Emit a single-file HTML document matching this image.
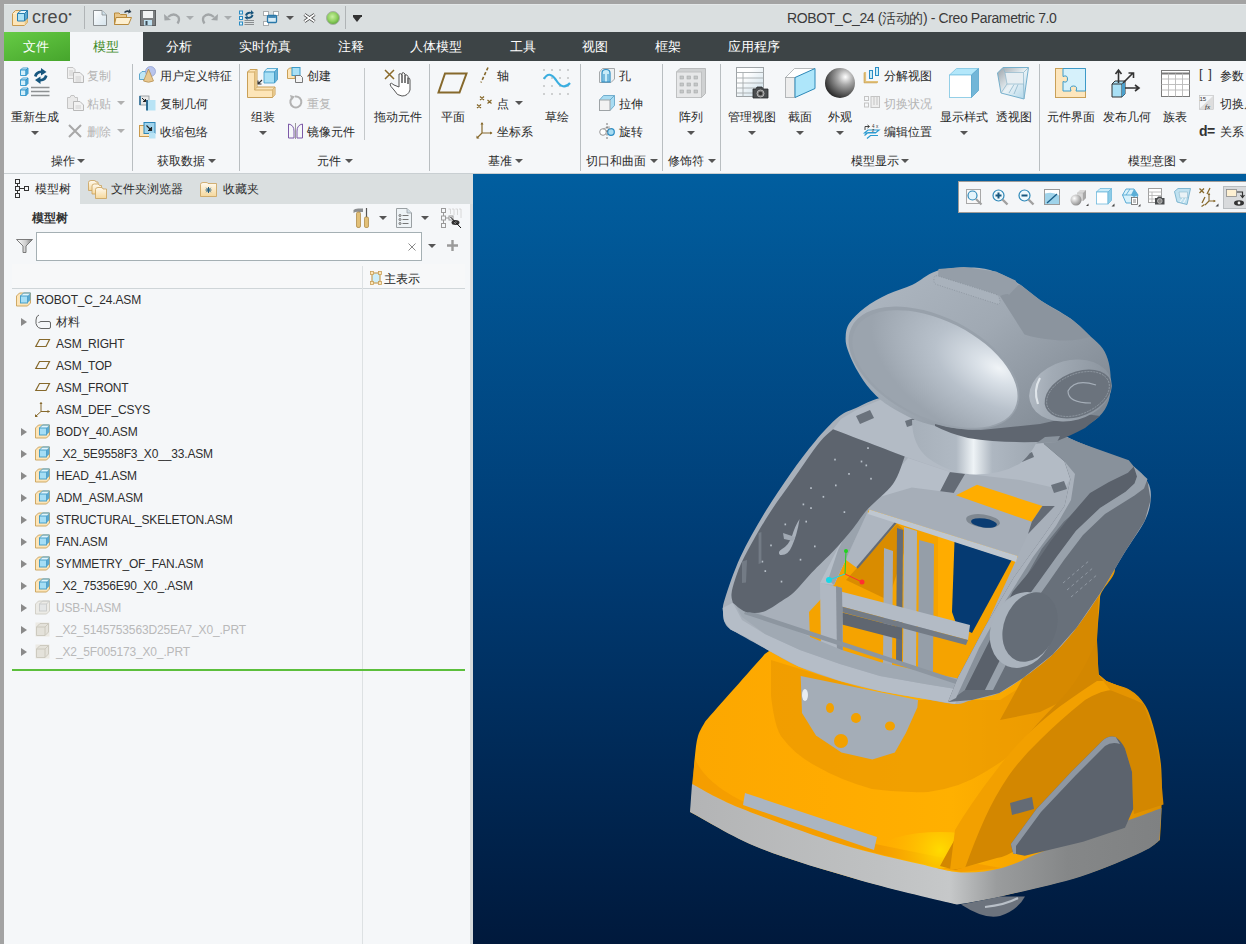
<!DOCTYPE html>
<html><head><meta charset="utf-8">
<style>
*{box-sizing:border-box;margin:0;padding:0}
html,body{width:1246px;height:944px;overflow:hidden;background:#a3a3a3;font-family:"Liberation Sans",sans-serif;color:#333}
.a{position:absolute}
svg{position:absolute;overflow:visible}
.t12{position:absolute;font-size:12px;line-height:12px;white-space:nowrap;color:#2b2b2b}
.t13{position:absolute;font-size:13px;line-height:13px;white-space:nowrap}
.dis{color:#b4b4b4}
#title{left:4px;top:4px;width:1242px;height:28px;background:#dadfe0;border-top:1px solid #e3e7e8}
#tabs{left:4px;top:32px;width:1242px;height:29px;background:#3d4446}
#ribbon{left:4px;top:61px;width:1242px;height:113px;background:#f5f7f9;border-bottom:1px solid #c9cfd2}
#panel{left:4px;top:174px;width:469px;height:770px;background:#f5f7f9}
#view{left:473px;top:174px;width:773px;height:770px;background:linear-gradient(#015e9f,#003b73 50%,#00193c)}
.tab{color:#fff}
.vsep{position:absolute;width:1px;background:#b9bec1}
.arr{position:absolute;width:0;height:0;border-left:4px solid transparent;border-right:4px solid transparent;border-top:4px solid #555}
</style></head><body>
<div id="title" class="a"></div>
<!-- title bar contents -->
<svg style="left:12px;top:10px" width="16" height="16" viewBox="0 0 16 16">
 <path d="M0.5 3.5 L3.5 0.5 H15.5 V12.5 L12.5 15.5 H0.5 Z" fill="#fde5b8" stroke="#c99a4e"/>
 <path d="M0.8 3.5 H12.5 V15.3" fill="none" stroke="#fff" stroke-width="0.6" opacity="0.6"/>
 <path d="M12.5 11.5 L15.5 8.5 V12.5 L12.5 15.5 Z" fill="#e9c98a"/>
 <path d="M5.5 3.5 L9 0.5 H15.5 L12.5 3.5 Z" fill="#e6f6fc" stroke="#2a7fb0" stroke-width="1"/>
 <path d="M5.5 3.5 H12.5 V11 H5.5 Z" fill="#aee3f7" stroke="#2a7fb0" stroke-width="1"/>
 <path d="M12.5 3.5 L15.5 0.5 V8 L12.5 11 Z" fill="#5ea9cf" stroke="#2a7fb0" stroke-width="1"/>
</svg>
<div class="a" style="left:32px;top:1px;font-size:18px;line-height:26px;color:#4a4a4a;letter-spacing:0.3px">creo<span style="font-size:6px;vertical-align:7px">&#9679;</span></div>
<div class="vsep" style="left:84px;top:6px;height:23px;background:#b0b4b6"></div>
<!-- new -->
<svg style="left:93px;top:10px" width="14" height="16" viewBox="0 0 14 16">
 <defs><linearGradient id="gdoc" x1="0" y1="0" x2="1" y2="1"><stop offset="0" stop-color="#fff"/><stop offset="1" stop-color="#d5e3ec"/></linearGradient></defs>
 <path d="M0.5 0.5 H9 L13.5 5 V15.5 H0.5 Z" fill="url(#gdoc)" stroke="#8a8f92"/>
 <path d="M9 0.5 V5 H13.5" fill="#cde0ea" stroke="#8a8f92" stroke-width="0.8"/>
</svg>
<!-- open -->
<svg style="left:114px;top:9px" width="18" height="16" viewBox="0 0 18 16">
 <path d="M0.5 4 H5 L6.5 5.5 H12.5 V15.5 H0.5 Z" fill="#e8c68a" stroke="#b88a3c"/>
 <path d="M2 8.5 H17.5 L14.5 15.5 H0.5 Z" fill="#fdefd0" stroke="#b88a3c"/>
 <path d="M10 3 Q12 0.5 15 1.5 L15 0 L17.5 3 L14 4.5 L14.5 3 Q12.5 2.5 11 4 Z" fill="#2b3c4c"/>
</svg>
<!-- save -->
<svg style="left:140px;top:10px" width="16" height="16" viewBox="0 0 16 16">
 <rect x="0.5" y="0.5" width="15" height="15" fill="#7c7f81" stroke="#5c5f61"/>
 <rect x="3" y="1" width="10" height="7" fill="#f2f4f5"/>
 <rect x="4" y="10" width="8" height="5.5" fill="#bfe0f0"/>
 <rect x="5.5" y="11" width="2" height="4" fill="#3b4a55"/>
</svg>
<!-- undo -->
<svg style="left:164px;top:13px" width="16" height="11" viewBox="0 0 16 11">
 <path d="M4 4 Q10 -1 14.5 4 Q16 7 13.5 10.5" fill="none" stroke="#a2a6a8" stroke-width="2.2"/>
 <path d="M0 1 L0.5 7.5 L7 7 Z" fill="#a2a6a8"/>
</svg>
<div class="arr" style="left:186px;top:16px;border-top-color:#a9adaf"></div>
<svg style="left:202px;top:13px" width="16" height="11" viewBox="0 0 16 11">
 <path d="M12 4 Q6 -1 1.5 4 Q0 7 2.5 10.5" fill="none" stroke="#a2a6a8" stroke-width="2.2"/>
 <path d="M16 1 L15.5 7.5 L9 7 Z" fill="#a2a6a8"/>
</svg>
<div class="arr" style="left:224px;top:16px;border-top-color:#a9adaf"></div>
<!-- regen small -->
<svg style="left:239px;top:10px" width="16" height="16" viewBox="0 0 16 16">
 <rect x="0.5" y="1" width="3" height="3" fill="#dff3fb" stroke="#2a8cc4" stroke-width="1"/>
 <rect x="0.5" y="6.5" width="3" height="3" fill="#dff3fb" stroke="#2a8cc4" stroke-width="1"/>
 <rect x="0.5" y="12" width="3" height="3" fill="#dff3fb" stroke="#2a8cc4" stroke-width="1"/>
 <path d="M5.5 10.5 H15 M5.5 12.5 H15 M5.5 14.5 H15" stroke="#8a8e90" stroke-width="1"/>
 <path d="M6 5 Q8 1 12 2 L12 0 L15 3 L11.5 5 L12 3.5 Q9 3 7.5 6 Z M14.5 5.5 Q12.5 9.5 8.5 8.5 L8.5 10 L5.5 7.5 L9 5.5 L8.5 7 Q11.5 7.5 13 4.5 Z" fill="#17547c"/>
</svg>
<!-- windows -->
<svg style="left:263px;top:11px" width="16" height="15" viewBox="0 0 16 15">
 <rect x="0.5" y="0.5" width="5" height="4" fill="#fff" stroke="#a9adaf"/>
 <rect x="10.5" y="0.5" width="5" height="4" fill="#fff" stroke="#a9adaf"/>
 <rect x="0.5" y="10.5" width="5" height="4" fill="#fff" stroke="#a9adaf"/>
 <rect x="4.5" y="4.5" width="9" height="7" rx="1" fill="#d8ecf6" stroke="#2877a8" stroke-width="1.3"/>
 <rect x="5.2" y="5.2" width="7.6" height="1.6" fill="#2877a8"/>
</svg>
<div class="arr" style="left:286px;top:16px;border-top-color:#555"></div>
<svg style="left:303px;top:13px" width="13" height="10" viewBox="0 0 13 10">
 <path d="M1.5 1.5 L11.5 8.5 M11.5 1.5 L1.5 8.5" stroke="#333" stroke-width="3.2"/>
 <path d="M1.5 1.5 L11.5 8.5 M11.5 1.5 L1.5 8.5" stroke="#fff" stroke-width="1.6"/>
</svg>
<svg style="left:326px;top:11px" width="14" height="14" viewBox="0 0 14 14">
 <defs><radialGradient id="gball" cx="0.45" cy="0.4" r="0.6"><stop offset="0" stop-color="#c8f0a0"/><stop offset="0.6" stop-color="#8fd060"/><stop offset="1" stop-color="#5fa83a"/></radialGradient></defs>
 <circle cx="7" cy="7" r="6.5" fill="url(#gball)" stroke="#a8b0a8" stroke-width="1"/>
</svg>
<div class="vsep" style="left:345px;top:6px;height:23px;background:#b0b4b6"></div>
<div class="a" style="left:353px;top:15px;width:9px;height:1.5px;background:#333"></div>
<div class="arr" style="left:353px;top:17px;border-left-width:4.5px;border-right-width:4.5px;border-top:5px solid #333"></div>
<div class="a" style="left:787px;top:9px;font-size:14px;line-height:18px;color:#3a3a3a;letter-spacing:-0.38px;white-space:nowrap">ROBOT_C_24 (活动的) - Creo Parametric 7.0</div>

<div id="tabs" class="a"></div>
<div class="a" style="left:4px;top:32px;width:66px;height:29px;background:linear-gradient(160deg,#66cb45,#46a52c)"></div>
<div class="a" style="left:70px;top:32px;width:73px;height:30px;background:#f5f7f9"></div>
<div class="t13 tab" style="left:23px;top:40px">文件</div>
<div class="t13" style="left:93px;top:40px;color:#3d8a1f">模型</div>
<div class="t13 tab" style="left:166px;top:40px">分析</div>
<div class="t13 tab" style="left:239px;top:40px">实时仿真</div>
<div class="t13 tab" style="left:338px;top:40px">注释</div>
<div class="t13 tab" style="left:410px;top:40px">人体模型</div>
<div class="t13 tab" style="left:510px;top:40px">工具</div>
<div class="t13 tab" style="left:582px;top:40px">视图</div>
<div class="t13 tab" style="left:655px;top:40px">框架</div>
<div class="t13 tab" style="left:728px;top:40px">应用程序</div>

<div id="ribbon" class="a"></div>
<!-- separators -->
<div class="vsep" style="left:132px;top:64px;height:107px"></div>
<div class="vsep" style="left:239px;top:64px;height:107px"></div>
<div class="vsep" style="left:364px;top:68px;height:72px;background:#c4c8ca"></div>
<div class="vsep" style="left:429px;top:64px;height:107px"></div>
<div class="vsep" style="left:580px;top:64px;height:107px"></div>
<div class="vsep" style="left:662px;top:64px;height:107px"></div>
<div class="vsep" style="left:720px;top:64px;height:107px"></div>
<div class="vsep" style="left:1039px;top:64px;height:107px"></div>

<!-- 操作 -->
<svg style="left:20px;top:67px" width="31" height="31" viewBox="0 0 31 31">
 <g stroke="#2d93c9" stroke-width="0.9">
  <path d="M0.5 3 L2.5 1 H8 L6 3 Z" fill="#f4fbfe"/><path d="M0.5 3 H6 V8.5 H0.5 Z" fill="#d3effa"/><path d="M6 3 L8 1 V6.5 L6 8.5 Z" fill="#5aaed8"/>
  <path d="M0.5 13 L2.5 11 H8 L6 13 Z" fill="#f4fbfe"/><path d="M0.5 13 H6 V18.5 H0.5 Z" fill="#d3effa"/><path d="M6 13 L8 11 V16.5 L6 18.5 Z" fill="#5aaed8"/>
  <path d="M0.5 23 L2.5 21 H8 L6 23 Z" fill="#f4fbfe"/><path d="M0.5 23 H6 V28.5 H0.5 Z" fill="#d3effa"/><path d="M6 23 L8 21 V26.5 L6 28.5 Z" fill="#5aaed8"/>
 </g>
 <path d="M11 20.5 H29.5 M11 24.5 H29.5 M11 28.5 H29.5" stroke="#8d9193" stroke-width="1.5"/>
 <path d="M14 9 Q15 4 21 3.5 L21 1 L26.5 5 L21 8.5 L21 6 Q17.5 6.5 16.5 10 Z" fill="#17577f"/>
 <path d="M27.5 9 Q26.5 14 20.5 14.5 L20.5 17 L15 13 L20.5 9.5 L20.5 12 Q24 11.5 25 8 Z" fill="#17577f"/>
</svg>
<div class="t12" style="left:11px;top:111px">重新生成</div>
<div class="arr" style="left:31px;top:131px"></div>
<svg style="left:67px;top:67px" width="17" height="16" viewBox="0 0 17 16">
 <path d="M0.5 0.5 H6 L8 2.5 V11.5 H0.5 Z" fill="#f0f0f0" stroke="#c4c4c4"/>
 <path d="M6.5 5.5 H13 L16.5 9 V15.5 H6.5 Z" fill="#f0f0f0" stroke="#b9b9b9"/>
 <path d="M8.5 10 H14 M8.5 12 H14 M8.5 14 H14 M2 4 H6 M2 6 H6 M2 8 H6" stroke="#c8c8c8" stroke-width="0.8"/>
</svg>
<div class="t12 dis" style="left:87px;top:70px">复制</div>
<svg style="left:67px;top:95px" width="17" height="16" viewBox="0 0 17 16">
 <path d="M0.5 2.5 H3 L4 0.5 H7 L8 2.5 H10.5 V13.5 H0.5 Z" fill="#eaeaea" stroke="#c4c4c4"/>
 <path d="M6.5 6.5 H13 L16.5 10 V15.5 H6.5 Z" fill="#f2f2f2" stroke="#b9b9b9"/>
 <path d="M8.5 11 H14 M8.5 13 H14" stroke="#c8c8c8" stroke-width="0.8"/>
</svg>
<div class="t12 dis" style="left:87px;top:98px">粘贴</div>
<div class="arr" style="left:117px;top:101px;border-top-color:#b0b0b0"></div>
<svg style="left:68px;top:124px" width="14" height="14" viewBox="0 0 14 14">
 <path d="M1 1 L13 13 M13 1 L1 13" stroke="#a8a8a8" stroke-width="2"/>
</svg>
<div class="t12 dis" style="left:87px;top:126px">删除</div>
<div class="arr" style="left:117px;top:129px;border-top-color:#b0b0b0"></div>
<div class="t12" style="left:51px;top:155px">操作</div>
<div class="arr" style="left:77px;top:159px"></div>

<!-- 获取数据 -->
<svg style="left:139px;top:66px" width="17" height="17" viewBox="0 0 17 17">
 <path d="M0.5 8 L3 5.5 H9 V11 L6.5 13.5 H0.5 Z" fill="#bfe6f5" stroke="#3d95c2" stroke-width="0.8"/>
 <circle cx="11.5" cy="5.5" r="5" fill="#b8c4ec" stroke="#8090c8" stroke-width="0.6"/>
 <path d="M9.5 3 L4.5 15 Q9.5 17.5 14.5 15 Z" fill="#e8c890" stroke="#b08848" stroke-width="0.7"/>
</svg>
<div class="t12" style="left:160px;top:70px">用户定义特征</div>
<svg style="left:139px;top:95px" width="17" height="16" viewBox="0 0 17 16">
 <rect x="1" y="1" width="9" height="9" fill="#e8e8e8" stroke="#8b9194" stroke-width="0.8"/>
 <path d="M1 1 V10" stroke="#2d6f98" stroke-width="1.6"/>
 <rect x="8" y="5" width="8.5" height="10.5" fill="#b8e3f5"/>
 <path d="M8 5 V15.5" stroke="#1d5f88" stroke-width="1.8"/>
 <path d="M3 3 L6.5 6.5 M6.5 4 V6.5 H4" stroke="#222" stroke-width="1"/>
</svg>
<div class="t12" style="left:160px;top:98px">复制几何</div>
<svg style="left:139px;top:122px" width="17" height="17" viewBox="0 0 17 17">
 <rect x="0.5" y="3.5" width="10" height="11" fill="#fde6bd" stroke="#c99a4e"/>
 <rect x="5" y="0.5" width="11" height="11" fill="#9fd3ec" stroke="#2d86b8"/>
 <rect x="10" y="11" width="6.5" height="5.5" fill="#b8e3f5"/>
 <path d="M7.5 3.5 L12.5 8.5 M12.5 5 V8.5 H9" stroke="#222" stroke-width="1.1"/>
</svg>
<div class="t12" style="left:160px;top:126px">收缩包络</div>
<div class="t12" style="left:157px;top:155px">获取数据</div>
<div class="arr" style="left:208px;top:159px"></div>

<!-- 元件 -->
<svg style="left:247px;top:68px" width="31" height="31" viewBox="0 0 31 31">
 <path d="M0.5 4 L3 1.5 H10 V19 H28 V26.5 L25.5 29.5 H0.5 Z" fill="#fde5b8" stroke="#c9a058"/>
 <path d="M7.5 4 V22 H25.5 V29.5 M7.5 22 L10 19 M25.5 22 L28 19" fill="none" stroke="#c9a058" stroke-width="0.9"/>
 <path d="M7.5 4 L10 1.5 M0.5 4 H7.5" stroke="#c9a058" stroke-width="0.9"/>
 <path d="M25.5 22 L28 19.5 V26.5 L25.5 29.5 Z M7.5 4 L10 1.5 V19 L7.5 22 Z" fill="#e6c68a"/>
 <path d="M17 4 L20 0.5 H30.5 L27.5 4 Z" fill="#d8f1fb" stroke="#3d9ac8" stroke-width="0.8"/>
 <path d="M17 4 H27.5 V15 H17 Z" fill="#a9e0f5" stroke="#3d9ac8" stroke-width="0.8"/>
 <path d="M27.5 4 L30.5 0.5 V11.5 L27.5 15 Z" fill="#6bb2d6" stroke="#3d9ac8" stroke-width="0.8"/>
 <path d="M15 12 L11 16 M11 12.5 V16 H14.5" stroke="#333" stroke-width="1.1" fill="none"/>
</svg>
<div class="t12" style="left:251px;top:111px">组装</div>
<div class="arr" style="left:259px;top:131px"></div>
<svg style="left:287px;top:67px" width="16" height="16" viewBox="0 0 16 16">
 <path d="M0.5 3 L2.5 1 H8 V11.5 H0.5 Z" fill="#fde5b8" stroke="#c9a058"/>
 <rect x="5" y="0.5" width="8" height="8" fill="#a9e0f5" stroke="#3d9ac8"/>
 <path d="M8.5 8.5 H13.5 L15.5 10.5 V15.5 H8.5 Z" fill="#f4f4f4" stroke="#777"/>
</svg>
<div class="t12" style="left:307px;top:70px">创建</div>
<svg style="left:288px;top:95px" width="14" height="14" viewBox="0 0 14 14">
 <path d="M4 3 A5.5 5.5 0 1 0 7 1.5" fill="none" stroke="#b3b3b3" stroke-width="2"/>
 <path d="M2 0 L7 1.5 L3.5 5.5 Z" fill="#b3b3b3"/>
</svg>
<div class="t12 dis" style="left:307px;top:98px">重复</div>
<svg style="left:288px;top:123px" width="15" height="16" viewBox="0 0 15 16">
 <path d="M0.5 1 Q6 2 6 8 V15 H0.5 Z" fill="none" stroke="#7c59a8" stroke-width="1"/>
 <path d="M14.5 1 Q9 2 9 8 V15 H14.5 Z" fill="none" stroke="#7c59a8" stroke-width="1"/>
 <path d="M7.5 0 V16" stroke="#999" stroke-width="1"/>
</svg>
<div class="t12" style="left:307px;top:126px">镜像元件</div>
<div class="t12" style="left:317px;top:155px">元件</div>
<div class="arr" style="left:345px;top:159px"></div>
<svg style="left:384px;top:69px" width="29" height="28" viewBox="0 0 29 28">
 <path d="M1 1 L10 10 M10 1 L1 10" stroke="#8a6a2a" stroke-width="1.5"/>
 <path d="M10 16 Q7 13 6 15 Q6 17 10 21 Q13 27 18 27 Q24 27 26 21 V11 Q26 8.5 24 9 V15 V7.5 Q23 5 21 6 V14 V5 Q20 3 18 4 V14 V6 Q17 4 15 5 V18 Z" fill="#fff" stroke="#555" stroke-width="1"/>
</svg>
<div class="t12" style="left:374px;top:111px">拖动元件</div>

<!-- 基准 -->
<svg style="left:437px;top:72px" width="31" height="22" viewBox="0 0 31 22">
 <path d="M8 1.5 H29.5 L22.5 20.5 H1.5 Z" fill="none" stroke="#86692c" stroke-width="2"/>
</svg>
<div class="t12" style="left:441px;top:111px">平面</div>
<svg style="left:480px;top:67px" width="9" height="16" viewBox="0 0 9 16">
 <path d="M8 0.5 L1 15.5" stroke="#86692c" stroke-width="1.6" stroke-dasharray="3.2 2"/>
</svg>
<div class="t12" style="left:497px;top:70px">轴</div>
<svg style="left:476px;top:96px" width="17" height="13" viewBox="0 0 17 13">
 <path d="M4 0.5 L8 4 M8 0.5 L4 4 M1 8.5 L5 12 M5 8.5 L1 12 M11.5 4 L15.5 7.5 M15.5 4 L11.5 7.5" stroke="#86692c" stroke-width="1.2"/>
</svg>
<div class="t12" style="left:497px;top:98px">点</div>
<div class="arr" style="left:515px;top:101px"></div>
<svg style="left:476px;top:122px" width="17" height="17" viewBox="0 0 17 17">
 <path d="M6 1 V11 H16 M6 11 L1 16" fill="none" stroke="#86692c" stroke-width="1.2"/>
 <path d="M4.5 2.5 L6 0 L7.5 2.5 Z M14 9.5 L16.5 11 L14 12.5 Z M0.5 13.5 L0.5 16.5 L3.5 16.5 Z" fill="#86692c"/>
</svg>
<div class="t12" style="left:497px;top:126px">坐标系</div>
<svg style="left:543px;top:69px" width="28" height="27" viewBox="0 0 28 27">
 <g fill="#8a8a8a"><circle cx="1" cy="1" r="0.7"/><circle cx="9" cy="1" r="0.7"/><circle cx="17" cy="1" r="0.7"/><circle cx="25" cy="1" r="0.7"/>
 <circle cx="1" cy="9" r="0.7"/><circle cx="9" cy="9" r="0.7"/><circle cx="17" cy="9" r="0.7"/><circle cx="25" cy="9" r="0.7"/>
 <circle cx="1" cy="17" r="0.7"/><circle cx="9" cy="17" r="0.7"/><circle cx="17" cy="17" r="0.7"/><circle cx="25" cy="17" r="0.7"/>
 <circle cx="1" cy="25" r="0.7"/><circle cx="9" cy="25" r="0.7"/><circle cx="17" cy="25" r="0.7"/><circle cx="25" cy="25" r="0.7"/></g>
 <path d="M1 10 Q6 1 13 11 Q20 22 27 14" fill="none" stroke="#3aaee0" stroke-width="2.2"/>
</svg>
<div class="t12" style="left:545px;top:111px">草绘</div>
<div class="t12" style="left:488px;top:155px">基准</div>
<div class="arr" style="left:515px;top:159px"></div>

<!-- 切口和曲面 -->
<svg style="left:599px;top:68px" width="16" height="15" viewBox="0 0 16 15">
 <path d="M0.5 4 L3.5 0.5 H15.5 V11 L12 14.5 H0.5 Z" fill="#eef0f1" stroke="#a5a9ab"/>
 <path d="M3 5 Q3 1.5 7 1.5 Q11 1.5 11 5 V14 H3 Z" fill="#c8ebf8" stroke="#2a8cc4" stroke-width="1.2"/>
 <path d="M5 6 V14 M9 6 V14" stroke="#2a8cc4" stroke-width="1"/>
</svg>
<div class="t12" style="left:619px;top:70px">孔</div>
<svg style="left:599px;top:95px" width="16" height="16" viewBox="0 0 16 16">
 <path d="M0.5 5 L4.5 0.5 H15.5 V10.5 L11 15.5 H0.5 Z" fill="#a8dcf2" stroke="#5a9ec4" stroke-width="0.8"/>
 <rect x="0.5" y="5" width="10.5" height="10.5" fill="#f2f2f2" stroke="#9ea3a6"/>
 <path d="M11 5 L15.5 0.5" stroke="#5a9ec4" stroke-width="0.8"/>
</svg>
<div class="t12" style="left:619px;top:98px">拉伸</div>
<svg style="left:599px;top:123px" width="16" height="16" viewBox="0 0 16 16">
 <circle cx="4" cy="9" r="3.3" fill="#fff" stroke="#999" stroke-width="1"/>
 <circle cx="12" cy="9" r="3.3" fill="#a8dcf2" stroke="#2a8cc4" stroke-width="1.2"/>
 <path d="M7.5 4 H11 M4 6 Q8 3 12 6" stroke="#999" stroke-width="0.8" fill="none"/>
 <path d="M8 0 V16" stroke="#555" stroke-width="0.8" stroke-dasharray="2 1.5"/>
</svg>
<div class="t12" style="left:619px;top:126px">旋转</div>
<div class="t12" style="left:586px;top:155px">切口和曲面</div>
<div class="arr" style="left:650px;top:159px"></div>

<!-- 修饰符 -->
<svg style="left:676px;top:68px" width="30" height="30" viewBox="0 0 30 30">
 <path d="M0.5 4 L4 0.5 H29.5 V25.5 L25.5 29.5 H0.5 Z" fill="#cfd1d2" stroke="#b9bbbc"/>
 <rect x="0.5" y="4" width="25" height="25.5" fill="#e6e7e8" stroke="#bfc1c2"/>
 <g fill="#c4c6c7" stroke="#a9abac" stroke-width="0.6">
  <rect x="4" y="8" width="3.5" height="3"/><rect x="11" y="8" width="3.5" height="3"/><rect x="18" y="8" width="3.5" height="3"/>
  <rect x="4" y="15" width="3.5" height="3"/><rect x="11" y="15" width="3.5" height="3"/><rect x="18" y="15" width="3.5" height="3"/>
  <rect x="4" y="22" width="3.5" height="3"/><rect x="11" y="22" width="3.5" height="3"/><rect x="18" y="22" width="3.5" height="3"/>
 </g>
</svg>
<div class="t12" style="left:679px;top:111px">阵列</div>
<div class="arr" style="left:687px;top:131px"></div>
<div class="t12" style="left:668px;top:155px">修饰符</div>
<div class="arr" style="left:708px;top:159px"></div>

<!-- 模型显示 -->
<svg style="left:736px;top:67px" width="33" height="32" viewBox="0 0 33 32">
 <defs><linearGradient id="gtab" x1="0" y1="0" x2="1" y2="1"><stop offset="0.3" stop-color="#fff"/><stop offset="1" stop-color="#c9dde8"/></linearGradient></defs>
 <rect x="0.5" y="0.5" width="27" height="29" fill="url(#gtab)" stroke="#9ea3a6"/>
 <path d="M0.5 5.5 H27.5 M0.5 11 H27.5 M0.5 16 H27.5 M0.5 21 H27.5 M0.5 26 H27.5 M7 5.5 V29.5" stroke="#a6abae" stroke-width="0.9"/>
 <path d="M17 22 H20 L21 20 H26 L27 22 H32 V31 H17 Z" fill="#4a4d4f" stroke="#2a2c2d" stroke-width="0.8"/>
 <circle cx="24.5" cy="26.5" r="3.5" fill="#777" stroke="#ccc" stroke-width="0.8"/>
 <circle cx="24.5" cy="26.5" r="1.8" fill="#333"/>
</svg>
<div class="t12" style="left:728px;top:111px">管理视图</div>
<div class="arr" style="left:748px;top:131px"></div>
<svg style="left:785px;top:68px" width="31" height="30" viewBox="0 0 31 30">
 <path d="M0.5 9.5 L9.5 0.5 H30 L20 9.5 Z" fill="#fff" stroke="#a5a9ab" stroke-width="0.8"/>
 <rect x="0.5" y="9.5" width="9.5" height="20" fill="#ededed" stroke="#a5a9ab" stroke-width="0.8"/>
 <path d="M10 9.5 L30 0.5 V20.5 L10 29.5 Z" fill="#aee6fa" stroke="#2c88b8" stroke-width="1"/>
</svg>
<div class="t12" style="left:788px;top:111px">截面</div>
<div class="arr" style="left:796px;top:131px"></div>
<svg style="left:825px;top:68px" width="30" height="30" viewBox="0 0 30 30">
 <defs><radialGradient id="gsph" cx="0.68" cy="0.3" r="0.75"><stop offset="0" stop-color="#fff"/><stop offset="0.35" stop-color="#a8a8a8"/><stop offset="1" stop-color="#2a2a2a"/></radialGradient></defs>
 <circle cx="15" cy="15" r="15" fill="url(#gsph)"/>
</svg>
<div class="t12" style="left:828px;top:111px">外观</div>
<div class="arr" style="left:836px;top:131px"></div>
<svg style="left:864px;top:67px" width="16" height="16" viewBox="0 0 16 16">
 <path d="M1 5 V15 H14" fill="none" stroke="#e2c27c" stroke-width="2.2"/>
 <path d="M1 5 V15 H14" fill="none" stroke="#c49848" stroke-width="0.6" transform="translate(-0.9,0.9)"/>
 <rect x="5.5" y="3.5" width="3" height="8" fill="#c8ebf8" stroke="#2a8cc4" stroke-width="1"/>
 <rect x="11.5" y="0.5" width="3" height="8" fill="#c8ebf8" stroke="#2a8cc4" stroke-width="1"/>
</svg>
<div class="t12" style="left:884px;top:70px">分解视图</div>
<svg style="left:864px;top:96px" width="16" height="12" viewBox="0 0 16 12">
 <rect x="0.5" y="0.5" width="4" height="4" fill="none" stroke="#c4c4c4"/><rect x="0.5" y="7" width="4" height="4" fill="none" stroke="#c4c4c4"/>
 <rect x="7" y="0.5" width="8.5" height="11" fill="#eee" stroke="#c4c4c4"/><path d="M10 0.5 V9 M13 0.5 V9" stroke="#c4c4c4"/>
</svg>
<div class="t12 dis" style="left:884px;top:98px">切换状况</div>
<svg style="left:864px;top:124px" width="16" height="15" viewBox="0 0 16 15">
 <path d="M0.5 9 L4 6 H15 L11.5 9 Z M0.5 11.5 L4 8.5 H12 M3 14.5 L6.5 11.5 H14" fill="none" stroke="#2a9ad0" stroke-width="1.2"/>
 <path d="M1 6 V2.5 H5 M3.5 1 L5.5 2.5 L3.5 4" fill="none" stroke="#333" stroke-width="0.9"/>
 <text x="8" y="4" font-size="4.5" fill="#333" font-family="Liberation Sans">4</text><text x="12" y="4" font-size="4.5" fill="#333" font-family="Liberation Sans">x</text><text x="8" y="8" font-size="4.5" fill="#333" font-family="Liberation Sans">z</text>
</svg>
<div class="t12" style="left:884px;top:126px">编辑位置</div>
<svg style="left:949px;top:68px" width="30" height="30" viewBox="0 0 30 30">
 <path d="M0.5 7 L7.5 0.5 H29.5 L22.5 7 Z" fill="#b3e7fa" stroke="#7cc4e2" stroke-width="0.8"/>
 <rect x="0.5" y="7" width="22" height="22.5" fill="#fff" stroke="#7cc4e2" stroke-width="0.8"/>
 <path d="M22.5 7 L29.5 0.5 V22.5 L22.5 29.5 Z" fill="#72b6d8" stroke="#5aa6cc" stroke-width="0.8"/>
</svg>
<div class="t12" style="left:940px;top:111px">显示样式</div>
<div class="arr" style="left:960px;top:131px"></div>
<svg style="left:997px;top:67px" width="33" height="32" viewBox="0 0 33 32">
 <defs><linearGradient id="gpersp" x1="0" y1="0" x2="1" y2="1"><stop offset="0" stop-color="#9aa2a8"/><stop offset="0.5" stop-color="#eaf2f6"/><stop offset="1" stop-color="#a9d3e8"/></linearGradient></defs>
 <path d="M0.5 6 L6 0.5 H31.5 L27 32 L4 26 Z" fill="url(#gpersp)" stroke="#6aa9c8" stroke-width="0.9"/>
 <path d="M8 5.5 H26.5 V17 H10 Z" fill="#e7eef2" stroke="#8fb8cc" stroke-width="0.7"/>
 <path d="M6 0.5 L8 5.5 M31.5 0.5 L26.5 5.5 M26.5 17 L27 32 M10 17 L4 26 M12 26 L17 17.5 M17 27 L21 17.5" stroke="#8fb8cc" stroke-width="0.8" fill="none"/>
</svg>
<div class="t12" style="left:996px;top:111px">透视图</div>
<div class="t12" style="left:851px;top:155px">模型显示</div>
<div class="arr" style="left:901px;top:159px"></div>

<!-- 模型意图 -->
<svg style="left:1055px;top:68px" width="31" height="30" viewBox="0 0 31 30">
 <rect x="0.5" y="0.5" width="30" height="29" fill="#fde6bd" stroke="#c9a058"/>
 <path d="M8 0.5 H30.5 V23 H21 Q23 18 18.5 18 Q14 18 16 23 H8 V13.5 Q12.5 15.5 12.5 11 Q12.5 6.5 8 8.5 Z" fill="#d6f1fb" stroke="#3d9ac8"/>
</svg>
<div class="t12" style="left:1047px;top:111px">元件界面</div>
<svg style="left:1111px;top:69px" width="30" height="29" viewBox="0 0 30 29">
 <path d="M1 15 L4 12 H14 V25 L11 28 H1 Z" fill="#a9e0f5" stroke="#333" stroke-width="1"/>
 <path d="M1 15 H11 V28 M11 15 L14 12" fill="none" stroke="#333" stroke-width="1"/>
 <path d="M11 15 L14 12 V25 L11 28 Z" fill="#4aa0cc"/>
 <path d="M7.5 14 V2 M4.5 5 L7.5 1 L10.5 5 M12 14 L22 4 M17.5 4 H22.5 V9 M14 19 H27 M24 16 L28 19 L24 22" fill="none" stroke="#333" stroke-width="1.6"/>
</svg>
<div class="t12" style="left:1103px;top:111px">发布几何</div>
<svg style="left:1161px;top:70px" width="29" height="27" viewBox="0 0 29 27">
 <rect x="0.5" y="0.5" width="28" height="26" fill="#fff" stroke="#7a7a7a"/>
 <path d="M0.5 3.5 H28.5" stroke="#7a7a7a" stroke-width="2"/>
 <path d="M0.5 9 H28.5 M0.5 14.5 H28.5 M0.5 20 H28.5 M7.5 3.5 V26.5 M14.5 3.5 V26.5 M21.5 3.5 V26.5" stroke="#b8b8b8" stroke-width="0.9"/>
</svg>
<div class="t12" style="left:1163px;top:111px">族表</div>
<div class="a" style="left:1199px;top:66px;font-size:13px;line-height:16px;color:#333;letter-spacing:1px">[&nbsp;]</div>
<div class="t12" style="left:1220px;top:70px">参数</div>
<svg style="left:1199px;top:95px" width="16" height="16" viewBox="0 0 16 16">
 <path d="M0 14 L14 1 V14 Z" fill="#ddd"/><rect x="0.5" y="0.5" width="14" height="14" fill="none" stroke="#bbb" stroke-width="0.6"/>
 <text x="0.5" y="6" font-size="6" fill="#333" font-family="Liberation Sans">15</text>
 <text x="6" y="13.5" font-size="7" font-style="italic" fill="#222" font-family="Liberation Serif">fx</text>
</svg>
<div class="t12" style="left:1220px;top:98px">切换尺寸</div>
<div class="a" style="left:1199px;top:124px;font-size:14px;line-height:14px;font-weight:bold;color:#333;letter-spacing:-0.5px">d=</div>
<div class="t12" style="left:1220px;top:126px">关系</div>
<div class="t12" style="left:1128px;top:155px">模型意图</div>
<div class="arr" style="left:1179px;top:159px"></div>

<div id="panel" class="a"></div>
<div class="a" style="left:80px;top:174px;width:393px;height:30px;background:#dadfe0"></div>
<div class="a" style="left:470px;top:204px;width:3px;height:740px;background:#d5dadc"></div>
<svg style="left:15px;top:179px" width="14" height="19" viewBox="0 0 14 19">
 <g fill="none" stroke="#333" stroke-width="1"><rect x="0.5" y="0.5" width="4" height="4"/><rect x="0.5" y="7.5" width="4" height="4"/><rect x="0.5" y="14.5" width="4" height="4"/><rect x="9.5" y="7.5" width="4" height="4"/>
 <path d="M2.5 4.5 V7.5 M2.5 11.5 V14.5 M4.5 9.5 H9.5"/></g>
</svg>
<div class="t12" style="left:35px;top:183px">模型树</div>
<svg style="left:88px;top:180px" width="19" height="19" viewBox="0 0 19 19">
 <defs><linearGradient id="gfold" x1="0" y1="0" x2="0" y2="1"><stop offset="0" stop-color="#fffaf0"/><stop offset="1" stop-color="#f5d89c"/></linearGradient></defs>
 <g stroke="#c9a058" stroke-width="0.8" fill="url(#gfold)">
 <path d="M0.5 2.5 Q0.5 0.5 3 0.5 H6 Q8 0.5 8 2 H10 V10.5 H0.5 Z"/>
 <path d="M4 6 Q4 4 6.5 4 H9.5 Q11.5 4 11.5 5.5 H13.5 V14 H4 Z"/>
 <path d="M7.5 9.5 Q7.5 7.5 10 7.5 H13 Q15 7.5 15 9 H18.5 V18.5 H7.5 Z"/></g>
</svg>
<div class="t12" style="left:111px;top:183px">文件夹浏览器</div>
<svg style="left:200px;top:182px" width="17" height="15" viewBox="0 0 17 15">
 <path d="M0.5 2.5 Q0.5 0.5 3 0.5 H6 Q8 0.5 8 1.5 H16.5 V14.5 H0.5 Z" fill="url(#gfold)" stroke="#c9a058" stroke-width="0.8"/>
 <path d="M8.5 5 V11 M5.5 8 H11.5 M6.3 5.8 L10.7 10.2 M10.7 5.8 L6.3 10.2" stroke="#1d5a80" stroke-width="1"/>
</svg>
<div class="t12" style="left:223px;top:183px">收藏夹</div>

<div class="t12" style="left:32px;top:212px;font-weight:bold;color:#333">模型树</div>
<svg style="left:353px;top:208px" width="17" height="20" viewBox="0 0 17 20">
 <path d="M0.5 2 Q2 0 7 0.5 H10 V4 H7 Q3 3 0.5 5 Z" fill="#8c8f92"/>
 <rect x="3.5" y="4" width="4" height="15.5" rx="1.5" fill="#e2c078" stroke="#a8823c" stroke-width="0.7"/>
 <path d="M13.5 0 V9" stroke="#555" stroke-width="1.2"/>
 <rect x="11.5" y="9" width="4" height="10.5" rx="1.3" fill="#e2c078" stroke="#a8823c" stroke-width="0.7"/>
</svg>
<div class="arr" style="left:379px;top:216px"></div>
<svg style="left:396px;top:208px" width="16" height="20" viewBox="0 0 16 20">
 <path d="M0.5 0.5 H11 L15.5 5 V19.5 H0.5 Z" fill="#eef3f6" stroke="#9aa0a3"/>
 <path d="M11 0.5 V5 H15.5" fill="#d0dde4" stroke="#9aa0a3" stroke-width="0.8"/>
 <g stroke="#555" stroke-width="0.8" fill="none"><circle cx="4" cy="7.5" r="1"/><circle cx="4" cy="11.5" r="1"/><circle cx="4" cy="15.5" r="1"/>
 <path d="M6.5 7.5 H12.5 M6.5 11.5 H12.5 M6.5 15.5 H12.5"/></g>
</svg>
<div class="arr" style="left:421px;top:216px"></div>
<svg style="left:441px;top:208px" width="21" height="21" viewBox="0 0 21 21">
 <g fill="none" stroke="#9a9a9a" stroke-width="1"><rect x="0.5" y="0.5" width="4" height="4"/><rect x="0.5" y="8" width="4" height="4"/><rect x="0.5" y="15.5" width="4" height="4"/><rect x="8" y="8" width="4" height="4"/>
 <path d="M2.5 4.5 V8 M2.5 12 V15.5 M4.5 10 H8"/></g>
 <path d="M7.5 1 H9.5 V6 M11 1 H13 V7 M14.5 1 H16.5 V7 M18 1 H20 V10" fill="none" stroke="#d0d0d0" stroke-width="0.8"/>
 <ellipse cx="14.5" cy="14.5" rx="4" ry="2.5" fill="#333"/>
 <circle cx="14.5" cy="14.5" r="1" fill="#eee"/>
 <path d="M9.5 9 L20 20" stroke="#111" stroke-width="1"/>
</svg>
<svg style="left:16px;top:239px" width="17" height="14" viewBox="0 0 17 14">
 <defs><linearGradient id="gfun" x1="0" y1="0" x2="1" y2="0"><stop offset="0" stop-color="#fff"/><stop offset="0.6" stop-color="#ccc"/><stop offset="1" stop-color="#777"/></linearGradient></defs>
 <path d="M0.5 0.5 H16.5 L10 7 V13.5 H7 V7 Z" fill="url(#gfun)" stroke="#6e6e6e" stroke-width="0.9"/>
</svg>
<div class="a" style="left:36px;top:232px;width:386px;height:29px;background:#fff;border:1px solid #a5b0b4"></div>
<svg style="left:408px;top:243px" width="8" height="8" viewBox="0 0 8 8"><path d="M0.5 0.5 L7.5 7.5 M7.5 0.5 L0.5 7.5" stroke="#8a8a8a" stroke-width="1"/></svg>
<div class="arr" style="left:428px;top:244px"></div>
<svg style="left:447px;top:240px" width="11" height="11" viewBox="0 0 11 11"><path d="M5.5 0 V11 M0 5.5 H11" stroke="#9a9a9a" stroke-width="2.4"/></svg>
<div class="a" style="left:12px;top:264px;width:453px;height:25px;background:#f7f8f9;border-bottom:1px solid #cfd5d8"></div>
<div class="a" style="left:362px;top:266px;width:1px;height:678px;background:#dde1e3"></div>
<svg style="left:370px;top:271px" width="12" height="14" viewBox="0 0 12 14">
 <rect x="2" y="2" width="8" height="10" fill="#cdeefa" stroke="#c9a058" stroke-width="1.2"/>
 <g fill="#fde5b8" stroke="#c9a058" stroke-width="0.8"><rect x="0.5" y="0.5" width="3" height="3"/><rect x="8.5" y="0.5" width="3" height="3"/><rect x="0.5" y="10.5" width="3" height="3"/><rect x="8.5" y="10.5" width="3" height="3"/></g>
</svg>
<div class="t12" style="left:384px;top:273px;color:#222">主表示</div>
<svg style="left:16px;top:292px" width="16" height="15" viewBox="0 0 16 15"><path d="M0.5 4 L3.5 1 H14.5 V11 L11.5 14 H0.5 Z" fill="#fde5b8" stroke="#c9a058" stroke-width="0.9"/><path d="M4.5 4 L7 1.5 H14 L11.5 4 Z" fill="#e2f5fc"/><rect x="4.5" y="4" width="7" height="7" fill="#a6def5" stroke="#3d9ac8" stroke-width="0.9"/><path d="M11.5 4 L14.5 1 V8 L11.5 11 Z" fill="#5aa8d0"/><path d="M4.5 4 L7.5 1 H14.5" fill="none" stroke="#3d9ac8" stroke-width="0.9"/></svg>
<div class="t12" style="letter-spacing:-0.17px;left:36px;top:294px;color:#2e2e2e">ROBOT_C_24.ASM</div>
<div class="a" style="left:21px;top:318px;width:0;height:0;border-top:4px solid transparent;border-bottom:4px solid transparent;border-left:6px solid #8a8a8a"></div>
<svg style="left:35px;top:314px" width="16" height="15" viewBox="0 0 16 15"><path d="M4 1 Q1 2 1 6 Q0.5 10 2 12 Q3 14 6 14.5 H14 Q15.5 14.5 15.5 13 V9 Q15.5 7.5 14 7.5 H6 Q4.5 7.5 3.5 9" fill="none" stroke="#555" stroke-width="0.9"/></svg>
<div class="t12" style="left:56px;top:316px;color:#2e2e2e">材料</div>
<svg style="left:35px;top:336px" width="16" height="15" viewBox="0 0 16 15"><path d="M4.5 3.5 H14.5 L11 10.5 H0.8 Z" fill="none" stroke="#86692c" stroke-width="1.2"/></svg>
<div class="t12" style="letter-spacing:-0.17px;left:56px;top:338px;color:#2e2e2e">ASM_RIGHT</div>
<svg style="left:35px;top:358px" width="16" height="15" viewBox="0 0 16 15"><path d="M4.5 3.5 H14.5 L11 10.5 H0.8 Z" fill="none" stroke="#86692c" stroke-width="1.2"/></svg>
<div class="t12" style="letter-spacing:-0.17px;left:56px;top:360px;color:#2e2e2e">ASM_TOP</div>
<svg style="left:35px;top:380px" width="16" height="15" viewBox="0 0 16 15"><path d="M4.5 3.5 H14.5 L11 10.5 H0.8 Z" fill="none" stroke="#86692c" stroke-width="1.2"/></svg>
<div class="t12" style="letter-spacing:-0.17px;left:56px;top:382px;color:#2e2e2e">ASM_FRONT</div>
<svg style="left:35px;top:402px" width="16" height="15" viewBox="0 0 16 15"><path d="M6 0.5 V9.5 H14.5 M6 9.5 L1 14" fill="none" stroke="#86692c" stroke-width="1"/><path d="M4.5 2 L6 0 L7.5 2 Z M12.5 8 L15 9.5 L12.5 11 Z M0 12 V15 H3 Z" fill="#86692c"/></svg>
<div class="t12" style="letter-spacing:-0.17px;left:56px;top:404px;color:#2e2e2e">ASM_DEF_CSYS</div>
<div class="a" style="left:21px;top:428px;width:0;height:0;border-top:4px solid transparent;border-bottom:4px solid transparent;border-left:6px solid #8a8a8a"></div>
<svg style="left:35px;top:424px" width="16" height="15" viewBox="0 0 16 15"><path d="M0.5 4 L3.5 1 H14.5 V11 L11.5 14 H0.5 Z" fill="#fde5b8" stroke="#c9a058" stroke-width="0.9"/><path d="M4.5 4 L7 1.5 H14 L11.5 4 Z" fill="#e2f5fc"/><rect x="4.5" y="4" width="7" height="7" fill="#a6def5" stroke="#3d9ac8" stroke-width="0.9"/><path d="M11.5 4 L14.5 1 V8 L11.5 11 Z" fill="#5aa8d0"/><path d="M4.5 4 L7.5 1 H14.5" fill="none" stroke="#3d9ac8" stroke-width="0.9"/></svg>
<div class="t12" style="letter-spacing:-0.17px;left:56px;top:426px;color:#2e2e2e">BODY_40.ASM</div>
<div class="a" style="left:21px;top:450px;width:0;height:0;border-top:4px solid transparent;border-bottom:4px solid transparent;border-left:6px solid #8a8a8a"></div>
<svg style="left:35px;top:446px" width="16" height="15" viewBox="0 0 16 15"><path d="M0.5 4 L3.5 1 H14.5 V11 L11.5 14 H0.5 Z" fill="#fde5b8" stroke="#c9a058" stroke-width="0.9"/><path d="M4.5 4 L7 1.5 H14 L11.5 4 Z" fill="#e2f5fc"/><rect x="4.5" y="4" width="7" height="7" fill="#a6def5" stroke="#3d9ac8" stroke-width="0.9"/><path d="M11.5 4 L14.5 1 V8 L11.5 11 Z" fill="#5aa8d0"/><path d="M4.5 4 L7.5 1 H14.5" fill="none" stroke="#3d9ac8" stroke-width="0.9"/></svg>
<div class="t12" style="letter-spacing:-0.17px;left:56px;top:448px;color:#2e2e2e">_X2_5E9558F3_X0__33.ASM</div>
<div class="a" style="left:21px;top:472px;width:0;height:0;border-top:4px solid transparent;border-bottom:4px solid transparent;border-left:6px solid #8a8a8a"></div>
<svg style="left:35px;top:468px" width="16" height="15" viewBox="0 0 16 15"><path d="M0.5 4 L3.5 1 H14.5 V11 L11.5 14 H0.5 Z" fill="#fde5b8" stroke="#c9a058" stroke-width="0.9"/><path d="M4.5 4 L7 1.5 H14 L11.5 4 Z" fill="#e2f5fc"/><rect x="4.5" y="4" width="7" height="7" fill="#a6def5" stroke="#3d9ac8" stroke-width="0.9"/><path d="M11.5 4 L14.5 1 V8 L11.5 11 Z" fill="#5aa8d0"/><path d="M4.5 4 L7.5 1 H14.5" fill="none" stroke="#3d9ac8" stroke-width="0.9"/></svg>
<div class="t12" style="letter-spacing:-0.17px;left:56px;top:470px;color:#2e2e2e">HEAD_41.ASM</div>
<div class="a" style="left:21px;top:494px;width:0;height:0;border-top:4px solid transparent;border-bottom:4px solid transparent;border-left:6px solid #8a8a8a"></div>
<svg style="left:35px;top:490px" width="16" height="15" viewBox="0 0 16 15"><path d="M0.5 4 L3.5 1 H14.5 V11 L11.5 14 H0.5 Z" fill="#fde5b8" stroke="#c9a058" stroke-width="0.9"/><path d="M4.5 4 L7 1.5 H14 L11.5 4 Z" fill="#e2f5fc"/><rect x="4.5" y="4" width="7" height="7" fill="#a6def5" stroke="#3d9ac8" stroke-width="0.9"/><path d="M11.5 4 L14.5 1 V8 L11.5 11 Z" fill="#5aa8d0"/><path d="M4.5 4 L7.5 1 H14.5" fill="none" stroke="#3d9ac8" stroke-width="0.9"/></svg>
<div class="t12" style="letter-spacing:-0.17px;left:56px;top:492px;color:#2e2e2e">ADM_ASM.ASM</div>
<div class="a" style="left:21px;top:516px;width:0;height:0;border-top:4px solid transparent;border-bottom:4px solid transparent;border-left:6px solid #8a8a8a"></div>
<svg style="left:35px;top:512px" width="16" height="15" viewBox="0 0 16 15"><path d="M0.5 4 L3.5 1 H14.5 V11 L11.5 14 H0.5 Z" fill="#fde5b8" stroke="#c9a058" stroke-width="0.9"/><path d="M4.5 4 L7 1.5 H14 L11.5 4 Z" fill="#e2f5fc"/><rect x="4.5" y="4" width="7" height="7" fill="#a6def5" stroke="#3d9ac8" stroke-width="0.9"/><path d="M11.5 4 L14.5 1 V8 L11.5 11 Z" fill="#5aa8d0"/><path d="M4.5 4 L7.5 1 H14.5" fill="none" stroke="#3d9ac8" stroke-width="0.9"/></svg>
<div class="t12" style="letter-spacing:-0.17px;left:56px;top:514px;color:#2e2e2e">STRUCTURAL_SKELETON.ASM</div>
<div class="a" style="left:21px;top:538px;width:0;height:0;border-top:4px solid transparent;border-bottom:4px solid transparent;border-left:6px solid #8a8a8a"></div>
<svg style="left:35px;top:534px" width="16" height="15" viewBox="0 0 16 15"><path d="M0.5 4 L3.5 1 H14.5 V11 L11.5 14 H0.5 Z" fill="#fde5b8" stroke="#c9a058" stroke-width="0.9"/><path d="M4.5 4 L7 1.5 H14 L11.5 4 Z" fill="#e2f5fc"/><rect x="4.5" y="4" width="7" height="7" fill="#a6def5" stroke="#3d9ac8" stroke-width="0.9"/><path d="M11.5 4 L14.5 1 V8 L11.5 11 Z" fill="#5aa8d0"/><path d="M4.5 4 L7.5 1 H14.5" fill="none" stroke="#3d9ac8" stroke-width="0.9"/></svg>
<div class="t12" style="letter-spacing:-0.17px;left:56px;top:536px;color:#2e2e2e">FAN.ASM</div>
<div class="a" style="left:21px;top:560px;width:0;height:0;border-top:4px solid transparent;border-bottom:4px solid transparent;border-left:6px solid #8a8a8a"></div>
<svg style="left:35px;top:556px" width="16" height="15" viewBox="0 0 16 15"><path d="M0.5 4 L3.5 1 H14.5 V11 L11.5 14 H0.5 Z" fill="#fde5b8" stroke="#c9a058" stroke-width="0.9"/><path d="M4.5 4 L7 1.5 H14 L11.5 4 Z" fill="#e2f5fc"/><rect x="4.5" y="4" width="7" height="7" fill="#a6def5" stroke="#3d9ac8" stroke-width="0.9"/><path d="M11.5 4 L14.5 1 V8 L11.5 11 Z" fill="#5aa8d0"/><path d="M4.5 4 L7.5 1 H14.5" fill="none" stroke="#3d9ac8" stroke-width="0.9"/></svg>
<div class="t12" style="letter-spacing:-0.17px;left:56px;top:558px;color:#2e2e2e">SYMMETRY_OF_FAN.ASM</div>
<div class="a" style="left:21px;top:582px;width:0;height:0;border-top:4px solid transparent;border-bottom:4px solid transparent;border-left:6px solid #8a8a8a"></div>
<svg style="left:35px;top:578px" width="16" height="15" viewBox="0 0 16 15"><path d="M0.5 4 L3.5 1 H14.5 V11 L11.5 14 H0.5 Z" fill="#fde5b8" stroke="#c9a058" stroke-width="0.9"/><path d="M4.5 4 L7 1.5 H14 L11.5 4 Z" fill="#e2f5fc"/><rect x="4.5" y="4" width="7" height="7" fill="#a6def5" stroke="#3d9ac8" stroke-width="0.9"/><path d="M11.5 4 L14.5 1 V8 L11.5 11 Z" fill="#5aa8d0"/><path d="M4.5 4 L7.5 1 H14.5" fill="none" stroke="#3d9ac8" stroke-width="0.9"/></svg>
<div class="t12" style="letter-spacing:-0.17px;left:56px;top:580px;color:#2e2e2e">_X2_75356E90_X0_.ASM</div>
<div class="a" style="left:21px;top:604px;width:0;height:0;border-top:4px solid transparent;border-bottom:4px solid transparent;border-left:6px solid #8a8a8a"></div>
<svg style="left:35px;top:600px" width="16" height="15" viewBox="0 0 16 15"><path d="M0.5 4 L3.5 1 H14.5 V11 L11.5 14 H0.5 Z" fill="#ecebe6" stroke="#cfcdc4" stroke-width="0.9"/><rect x="4.5" y="4" width="7" height="7" fill="#e4e6e6" stroke="#c8cbcb" stroke-width="0.9"/><path d="M4.5 4 L7.5 1 H14.5 M11.5 4 L14.5 1" fill="none" stroke="#c8cbcb" stroke-width="0.9"/></svg>
<div class="t12" style="letter-spacing:-0.17px;left:56px;top:602px;color:#b9b9b9">USB-N.ASM</div>
<div class="a" style="left:21px;top:626px;width:0;height:0;border-top:4px solid transparent;border-bottom:4px solid transparent;border-left:6px solid #8a8a8a"></div>
<svg style="left:35px;top:622px" width="16" height="15" viewBox="0 0 16 15"><rect x="0.5" y="0.5" width="14" height="14" fill="#eceae4"/><path d="M1.5 5 L5 1.5 H13.5 V10 L10 13.5 H1.5 Z" fill="#e4e2da" stroke="#c9c6bb" stroke-width="0.9"/><path d="M1.5 5 H10 V13.5 M10 5 L13.5 1.5" fill="none" stroke="#c9c6bb" stroke-width="0.9"/></svg>
<div class="t12" style="letter-spacing:-0.17px;left:56px;top:624px;color:#b9b9b9">_X2_5145753563D25EA7_X0_.PRT</div>
<div class="a" style="left:21px;top:648px;width:0;height:0;border-top:4px solid transparent;border-bottom:4px solid transparent;border-left:6px solid #8a8a8a"></div>
<svg style="left:35px;top:644px" width="16" height="15" viewBox="0 0 16 15"><rect x="0.5" y="0.5" width="14" height="14" fill="#eceae4"/><path d="M1.5 5 L5 1.5 H13.5 V10 L10 13.5 H1.5 Z" fill="#e4e2da" stroke="#c9c6bb" stroke-width="0.9"/><path d="M1.5 5 H10 V13.5 M10 5 L13.5 1.5" fill="none" stroke="#c9c6bb" stroke-width="0.9"/></svg>
<div class="t12" style="letter-spacing:-0.17px;left:56px;top:646px;color:#b9b9b9">_X2_5F005173_X0_.PRT</div>
<div class="a" style="left:12px;top:669px;width:453px;height:2px;background:#5cbf3c"></div>

<div id="view" class="a"></div>
<svg style="left:473px;top:174px" width="773" height="770" viewBox="473 174 773 770">
 <defs>
  <linearGradient id="gOr" x1="690" y1="0" x2="1165" y2="0" gradientUnits="userSpaceOnUse">
   <stop offset="0" stop-color="#fca700"/><stop offset="0.3" stop-color="#ffab00"/><stop offset="0.55" stop-color="#ffb000"/><stop offset="0.75" stop-color="#f5a300"/><stop offset="1" stop-color="#dc8f00"/>
  </linearGradient>
  <linearGradient id="gStrip" x1="690" y1="0" x2="1162" y2="0" gradientUnits="userSpaceOnUse">
   <stop offset="0" stop-color="#b3b4b5"/><stop offset="0.4" stop-color="#bfc1c2"/><stop offset="0.55" stop-color="#c6c8c9"/><stop offset="0.65" stop-color="#9a9c9d"/><stop offset="0.8" stop-color="#858788"/><stop offset="1" stop-color="#7f8182"/>
  </linearGradient>
  <linearGradient id="gHead" x1="0" y1="0" x2="1" y2="0.8">
   <stop offset="0" stop-color="#b0b9c3"/><stop offset="0.5" stop-color="#a0a9b3"/><stop offset="1" stop-color="#7f8892"/>
  </linearGradient>
  <radialGradient id="gFace" cx="0.8" cy="0.22" r="0.75" fx="0.82" fy="0.2">
   <stop offset="0" stop-color="#f0f4f7"/><stop offset="0.18" stop-color="#d9e0e7"/><stop offset="0.5" stop-color="#b8c1cb"/><stop offset="1" stop-color="#9ba4ae"/>
  </radialGradient>
  <linearGradient id="gNeck" x1="913" y1="0" x2="1057" y2="0" gradientUnits="userSpaceOnUse">
   <stop offset="0" stop-color="#a7b0ba"/><stop offset="0.3" stop-color="#b0b9c3"/><stop offset="0.42" stop-color="#eef3f6"/><stop offset="0.55" stop-color="#aeb7c1"/><stop offset="1" stop-color="#98a1ab"/>
  </linearGradient>
  <radialGradient id="gYel" cx="940" cy="850" r="60" gradientUnits="userSpaceOnUse">
   <stop offset="0" stop-color="#ffe000" stop-opacity="0.9"/><stop offset="1" stop-color="#ffb000" stop-opacity="0"/>
  </radialGradient>
 <linearGradient id="gEar" x1="0" y1="0" x2="1" y2="0.3">
   <stop offset="0" stop-color="#b8c0c9"/><stop offset="0.35" stop-color="#a2abb5"/><stop offset="1" stop-color="#8c959f"/>
  </linearGradient>
 </defs>
 <!-- orange base -->
 <path d="M764.8 654.0 C754.9 665.2 715.3 710.0 705.4 721.2 L705.4 721.2 C704.2 723.7 699.8 730.0 698.0 736.0 C696.2 742.0 695.7 749.1 694.8 757.2 C693.9 765.3 693.4 775.6 692.7 784.8 C692.0 794.0 691.0 807.7 690.6 812.3 L690.6 812.3 C702.2 818.2 731.8 836.7 760.0 848.0 C788.2 859.3 827.2 870.7 860.0 880.0 C892.8 889.3 940.8 900.0 957.0 904.0 L957.0 904.0 C964.3 902.7 980.3 900.7 1001.0 896.0 C1021.7 891.3 1057.7 883.3 1081.0 876.0 C1104.3 868.7 1127.8 858.0 1141.0 852.0 C1154.2 846.0 1156.8 842.0 1160.0 840.0 L1160.0 840.0 C1160.2 834.7 1161.3 820.5 1161.5 808.0 C1161.7 795.5 1162.2 778.2 1161.0 765.0 C1159.8 751.8 1156.7 739.0 1154.0 729.0 C1151.3 719.0 1149.0 711.5 1145.0 705.0 C1141.0 698.5 1136.5 693.9 1130.0 690.0 C1123.5 686.1 1111.2 683.8 1106.0 681.5 C1100.8 679.2 1100.2 676.9 1099.0 676.0 L1099.0 676.0 C1098.7 670.0 1096.8 653.0 1097.0 640.0 C1097.2 627.0 1099.5 611.3 1100.0 598.0 C1100.5 584.7 1133.3 566.3 1100.0 560.0 C1066.7 553.7 933.3 560.0 900.0 560.0 Z" fill="url(#gOr)"/>
 <!-- cup darker inside -->
 <path opacity="0.6" d="M771 660 L771 696 Q775 730 782.5 738 Q795 755 816 766 Q840 780 872 789 Q900 793 928 792 Q960 788 985 772 Q1005 760 1021 747 Q1040 730 1055 716 Q1075 698 1097 682 L1097 640 L1000 700 L900 700 Z" fill="#e89600"/>
 <path d="M692 784 Q700 790 740 808 Q800 832 840 844 Q900 860 961 872 L1001 868 Q940 858 880 845 Q800 825 740 800 Q705 782 695 759 Z" fill="#f39b00" opacity="0.8"/>
 <ellipse cx="940" cy="850" rx="60" ry="18" fill="url(#gYel)"/>
 <path d="M1100 560 L1097 640 L1098 674 L1106 681 L1085 690 L1040 712 L1000 720 L1023 678 L1052.7 654.4 L1076.5 627.7 L1103 589 Z" fill="#d68900"/>
 <!-- right shoulder bands -->
 <path d="M1097 640 L1098 674 L1106.4 681 L1129.7 690.3 L1143.7 704.3 L1153 730 L1160 764.8 L1163.5 804.5 L1134 814 L1133 806 L1132 771.8 L1125 748.5 L1115.7 737 Q1070 790 1040 830 Q1015 855 996.9 858 L955 870 L940 866 Q965 820 985 790 Q1020 740 1060 700 Q1080 680 1097 640 Z" fill="#d38700"/>
 <path d="M1097 681 Q1080 692 1059.8 706.6 Q1040 722 1024.8 736.9 Q1010 752 996.9 769.5 Q983 787 971.3 804.5 Q962 818 955 830 L950 870 L965 868 Q975 840 985 818 Q995 796 1008.5 776 Q1022 757 1040 740 Q1060 720 1085 700 Q1105 688 1118 690 L1106.4 681 Z" fill="#f2a000"/>
 <path d="M1098 674 L1106.4 681 L1129.7 690.3 L1143.7 704.3 L1135 700 Q1120 694 1110 690 Z" fill="#e59400"/>
 <!-- gray bottom strip -->
 <path d="M692.0 784.0 C700.0 788.0 715.2 798.0 740.0 808.0 C764.8 818.0 810.4 834.6 840.5 844.0 C870.6 853.4 900.7 859.6 920.8 864.3 C940.9 869.0 947.6 871.7 961.0 872.4 C974.4 873.1 987.7 871.6 1001.0 868.3 C1014.3 864.9 1027.7 857.6 1041.0 852.3 C1054.3 846.9 1066.3 841.6 1081.0 836.2 C1095.7 830.8 1115.6 824.7 1129.0 820.0 C1142.4 815.3 1156.1 810.0 1161.5 808.0 L1161.5 808.0 C1161.2 813.4 1159.8 834.9 1159.5 840.3 L1159.5 840.3 C1156.5 842.3 1154.6 846.3 1141.5 852.3 C1128.4 858.3 1104.4 869.0 1081.0 876.4 C1057.6 883.8 1021.7 891.7 1001.0 896.4 C980.3 901.1 964.3 903.1 957.0 904.5 L957.0 904.5 C940.9 900.5 893.4 889.8 860.6 880.4 C827.8 871.0 788.4 859.7 760.0 848.3 C731.6 836.9 701.7 818.0 690.0 812.0 Z" fill="url(#gStrip)"/>
 <!-- wheel -->
 <path d="M961 904.5 Q985 920 1000 916 Q1018 910 1025 896.4 L1001 896.4 Z" fill="#6c737d"/>
 <path d="M985 907 Q1005 905 1018 898" stroke="#b9c0c8" stroke-width="2" fill="none"/>
 <!-- front light strip -->
 <path d="M745 793 L877 837 L874 850 L743 805 Z" fill="#abb5c1"/>
 <!-- wheel arch -->
 <path d="M1115.7 737 Q1122 742 1125 748.5 L1132 771.8 L1133.2 809 L1125 827.8 L1083 841.7 L1024.8 855.7 L1013.2 853.4 L1010.9 844 L1036.5 809 L1071.4 771.8 L1101.7 741.5 Q1108 735 1115.7 737 Z" fill="#5c636d"/>
 <path d="M1115.7 737 Q1108 735 1101.7 741.5 L1071.4 771.8 L1036.5 809 L1010.9 844 L1013.2 853.4 L1016 854 L1016 846 L1041 812 L1076 775 L1105 746 Q1112 741 1120 744 Z" fill="#8e97a2"/>
 <path d="M1010 803 L1032 797 L1034 809 L1012 815 Z" fill="#646b75"/>
 <!-- gray body silhouette -->
 <path d="M1000.0 420.0 C983.3 416.5 920.0 402.7 900.0 399.0 C880.0 395.3 887.3 396.5 880.0 398.0 C872.7 399.5 863.0 404.8 856.0 408.0 C849.0 411.2 845.1 411.4 838.3 417.0 C831.5 422.6 823.0 431.9 815.0 441.4 C807.0 450.9 798.9 461.6 790.3 473.9 C781.7 486.2 771.6 501.1 763.3 515.0 C755.0 528.9 746.8 543.2 740.4 557.0 C734.0 570.8 728.1 588.5 725.2 597.7 C722.3 606.9 722.9 607.5 723.0 612.0 C723.1 616.5 723.5 621.4 726.0 625.0 C728.5 628.6 731.1 629.4 738.0 633.5 C744.9 637.6 757.1 644.2 767.2 649.7 C777.3 655.2 786.3 661.2 798.5 666.4 C810.7 671.6 826.3 676.8 840.2 681.0 C854.1 685.2 868.1 688.5 882.0 691.5 C895.9 694.5 911.5 696.7 923.7 698.8 C935.9 700.9 947.0 703.8 955.0 704.0 C963.0 704.2 964.6 701.8 972.0 700.0 C979.4 698.2 990.8 696.7 999.3 693.0 C1007.8 689.3 1014.1 684.4 1023.0 678.0 C1031.9 671.6 1043.8 662.8 1052.7 654.4 C1061.6 646.0 1068.1 638.6 1076.5 627.7 C1084.9 616.8 1095.1 601.4 1103.0 589.0 C1110.9 576.6 1117.0 564.9 1124.0 553.5 C1131.0 542.1 1140.3 529.8 1144.7 520.9 C1149.1 512.0 1150.1 506.4 1150.6 500.0 C1151.1 493.6 1151.2 488.2 1147.7 482.3 C1144.2 476.4 1140.8 470.9 1129.9 464.5 C1119.0 458.1 1095.3 449.1 1082.4 443.7 C1069.5 438.3 1066.4 435.8 1052.7 431.9 C1039.0 427.9 1008.8 422.0 1000.0 420.0 Z" fill="#a8b0ba"/>
 <!-- upper top surface lighter -->
 <path d="M880 400 L858 409 L841 419 L833 429.3 L904.7 456.5 L950 472 L1020 480 L1064 490 L1070 479 L1064 461 L1044 444 L1000 420 Z" fill="#b3bbc5"/>
 <path d="M856 416 L870 410 L874 418 L860 424 Z M905 421 L914 418 L916 424 L907 427 Z M1051 485 L1064 481 L1067 489 L1054 493 Z M1020 457 L1032 452 L1034 457 L1022 462 Z" fill="#6a727c"/>

 <!-- cavity orange -->
 <path d="M869 509 L1018 556 L985 628 L958 680 L900 672 L845 655 L810 640 L809 612 L834 585 Z" fill="#f5a300"/>
 <path d="M897 524 L846 580 L888 600 L910 535 Z" fill="#d98c00"/>
 <path d="M938 530 L955 535 L953 640 L938 636 Z" fill="#ffac00"/>
 <!-- blue opening -->
 <path d="M954.5 541.5 L1011.7 560 L972 633 L957 626 L952 612 Z" fill="#053a72"/>
 <path d="M850 508 L898 520 L857 568 L846 560 Z" fill="#aeb6c0"/>
 <path d="M898 520 L857 568" stroke="#646b75" stroke-width="2"/>
 <!-- columns -->
 <path d="M904 527 L917 531 L916 668 L903 665 Z" fill="#aab2bc"/>
 <path d="M897 528 L903 530 L902 664 L896 662 Z" fill="#656c76"/>
 <path d="M884 548 L893 551 L892 668 L883 665 Z" fill="#a5adb7"/>
 <path d="M919 540 L934 544 L933 672 L918 668 Z" fill="#959ea8"/>
 <!-- strut from neck -->
 <path d="M949 472 L965 474 L946 506 L934 503 Z" fill="#646b75"/>
 <!-- horizontal bar -->
 <path d="M835 590 L970 625 L968 640 L832 604 Z" fill="#b3bbc5"/>
 <path d="M832 604 L968 640 L966 645 L830 609 Z" fill="#737b85"/>
 <path d="M840 612 L902 628 L902 640 L840 624 Z" fill="#5f6670"/>
 <!-- vertical post left -->
 <path d="M820 583 L842 588 L843 660 L821 655 Z" fill="#b0b8c2"/>
 <path d="M836 586 L842 588 L843 660 L837 658 Z" fill="#8a929c"/>
 <!-- left diagonal light strip right of screen -->
 <path d="M908 458 L950 472 L934 503 L869 509 L834 585 L820 583 L842 540 L866 505 Z" fill="#b6bec8"/>
 <path d="M869 509 L861 503 L838 550 L828 580 L834 585 Z" fill="#9aa3ad"/>
 <!-- rim lower bands -->
 <path d="M722.6 607.9 L723.9 620.6 L730.3 629.5 L746.3 637.2 L767.2 649.7 L798.5 666.4 L840.2 681 L882 691.5 L923.7 698.8 L955 704 L962 690 L925 684 L880 676 L840 664 L800 650 L765 634 L742 620 L732.8 602.8 Z" fill="#b5bdc7"/>
 <path d="M733 600 L742 617 L765 634 L800 650 L840 664 L880 676 L925 684 L962 690 L966 680 L925 672 L880 662 L842 650 L808 636 L775 622 L750 608 L745 598 Z" fill="#a0a9b3"/>
 <path d="M746 610 L958 680 L956 684 L744 614 Z" fill="#8d96a0"/>
 <!-- bracket -->
 <path d="M800.7 676 L802 713 L816 735.5 L841.5 752.4 L872.4 759.4 L894.8 752.4 L906 732.7 L917.3 707.4 L918 700 Z" fill="#a4adb7"/>
 <g fill="#f2a100"><ellipse cx="830" cy="708" rx="4" ry="5"/><ellipse cx="856" cy="718" rx="5" ry="5"/><ellipse cx="890" cy="726" rx="5" ry="4.5"/><circle cx="841" cy="741" r="7"/></g>
 <ellipse cx="805" cy="695" rx="3" ry="6" fill="#e8edf1"/>
 <!-- top plate -->
 <path d="M860.6 502.4 L911.8 487.4 L1054.8 506 L1028 534 L1017.7 556 L869.4 509.5 Z" fill="#a6aeb8"/>
 <path d="M869.4 509.5 L1017.7 556 L1016 562 L868 514 Z" fill="#bfc7d0"/>
 <ellipse cx="983" cy="521" rx="17" ry="6.5" transform="rotate(8 983 521)" fill="#7f8891"/>
 <ellipse cx="984" cy="523" rx="13" ry="4.5" transform="rotate(8 984 523)" fill="#0a3c72"/>
 <path d="M977 484.7 L1042.4 506 L1031.8 521.8 L956 495.3 Z" fill="#ffad00"/>
 <path d="M1042.4 506 L1054.8 506 L1028 534 L1031.8 521.8 Z" fill="#646b75"/>
 <!-- screen dark panel -->
 <path d="M833.0 429.3 C845.0 433.8 892.8 452.0 904.7 456.5 L904.7 456.5 C902.8 461.1 899.2 475.2 893.0 484.0 C886.8 492.8 874.3 501.7 867.5 509.3 C860.7 516.9 857.7 522.8 852.2 529.6 C846.7 536.4 841.2 542.8 834.4 550.0 C827.6 557.2 818.2 565.9 811.6 572.8 C805.0 579.7 800.1 586.5 795.0 591.3 C789.9 596.1 786.3 598.1 781.0 601.5 C775.7 604.9 769.2 610.0 763.3 611.7 C757.4 613.4 750.6 613.2 745.5 611.7 C740.4 610.2 734.9 604.3 732.8 602.8 L732.8 602.8 C732.6 601.3 731.1 597.9 731.5 593.9 C731.9 589.9 733.3 584.8 735.4 578.6 C737.5 572.5 738.8 567.6 744.3 557.0 C749.8 546.4 760.0 528.2 768.4 515.0 C776.8 501.8 786.1 489.5 794.5 477.5 C802.9 465.5 812.6 451.0 819.0 443.0 C825.4 435.0 830.7 431.6 833.0 429.3 Z" fill="#5d646e"/>
 <g fill="#b9c1ca"><rect x="867.2" y="447.2" width="1.6" height="1.8"/><rect x="834.2" y="458.7" width="1.6" height="1.8"/><rect x="860.7" y="460.6" width="1.6" height="1.8"/><rect x="865.5" y="464.5" width="1.6" height="1.8"/><rect x="848.2" y="473.0" width="1.6" height="1.8"/><rect x="870.2" y="477.8" width="1.6" height="1.8"/><rect x="835.0" y="484.5" width="1.6" height="1.8"/><rect x="810.2" y="487.2" width="1.6" height="1.8"/><rect x="822.6" y="495.9" width="1.6" height="1.8"/><rect x="802.6" y="503.5" width="1.6" height="1.8"/><rect x="810.2" y="507.2" width="1.6" height="1.8"/><rect x="843.6" y="511.2" width="1.6" height="1.8"/><rect x="805.4" y="520.7" width="1.6" height="1.8"/><rect x="784.5" y="523.5" width="1.6" height="1.8"/><rect x="814.0" y="545.5" width="1.6" height="1.8"/><rect x="770.2" y="544.5" width="1.6" height="1.8"/><rect x="761.6" y="560.7" width="1.6" height="1.8"/><rect x="764.5" y="570.2" width="1.6" height="1.8"/><rect x="799.7" y="558.8" width="1.6" height="1.8"/><rect x="780.7" y="580.7" width="1.6" height="1.8"/></g>
 <path d="M799.6 519 Q797 535 792 546 Q788 556 780 555 Q777 552 782 549 Q789 545 792 536 Q795 526 799.6 519 Z" fill="#a9b1bb"/>
 <path d="M783 533 L795 537 L793 541 L784 539 Z" fill="#a0a8b2"/>
 <path d="M758.6 533 L761.4 532 L761.4 563 L758.6 564 Z M742 561.5 L747 560 L746 582.5 L742 583 Z" fill="#737b85"/>
 <!-- arm -->
 <path d="M1043.8 443.7 L1064.6 461.5 L1070.5 479.3 L1064.6 506 L1043.8 535.7 L1014 577.2 L984.5 627.7 L957.8 678 L948 702 L972 700 L999.3 693 L1023 678 L1052.7 654.4 L1076.5 627.7 L1103 589 L1124 553.5 L1144.7 520.9 L1150.6 500 L1147.7 482.3 L1129.9 464.5 L1082.4 443.7 L1052.7 431.9 Z" fill="#68707a"/>
 <path d="M1043.8 443.7 L1052.7 431.9 L1082.4 443.7 L1128.8 460.3 L1135.6 468.8 L1118.6 480.7 L1093 496 L1064 521.4 L1042 548.5 L1017 592.5 L990 640 L965 690 L948 702 L957.8 678 L984.5 627.7 L1014 577.2 L1043.8 535.7 L1064.6 506 L1070.5 479.3 L1064.6 461.5 Z" fill="#88919b"/>
 <path d="M1064.6 461.5 L1070.5 479.3 L1064.6 506 L1043.8 535.7 L1014 577.2 L984.5 627.7 L957.8 678 L948 702 L956 698 L979 648 L1006 600 L1033 557 L1056 526 L1071 500 L1075 474 Z" fill="#aab2bc"/>
 <path d="M1133.9 466.4 L1128 472.7 L1109 482 L1090 493 L1071 515 L1050.8 541 L1031.8 569 L1012.7 591.8 L990 640 L965 690 L985 690 L1010 640 L1025.4 600 L1040.7 579 L1057 556.2 L1076 530.8 L1100 508 L1125.6 491.8 L1134.5 483.5 L1137 476.5 Z" fill="#5a616b"/>
 <path d="M1133.9 466.4 L1137 476.5 L1134.5 483.5 L1125.6 491.8 L1100 508 L1076 530.8 L1057 556.2 L1040.7 579 L1025.4 600 L1010 640 L985 690 L993 690 L1018 641 L1033 604 L1048 583 L1064 560 L1083 535 L1105 514 L1134.5 495.6 L1144 488.6 L1147.5 479 Z" fill="#98a1ab"/>
 
 <!-- vent dashes -->
 <path d="M1063 583 L1090 560 M1067 590 L1094 567 M1071 597 L1098 574" stroke="#9aa3ad" stroke-width="0.8" stroke-dasharray="3 3"/>
 <!-- shoulder disc -->
 <ellipse cx="1022" cy="630" rx="31" ry="39" transform="rotate(22 1022 630)" fill="#aab3bd"/>
 <ellipse cx="1030" cy="627" rx="26" ry="36" transform="rotate(22 1030 627)" fill="#656d77"/>

 <!-- neck -->
 <path d="M912 420 Q912 445 928 458 Q950 474 976 474.5 Q1005 474 1022 462 Q1032 452 1036 443.5 L1057 442 L1060 428 L1000 418 Z" fill="url(#gNeck)"/>
 <!-- head -->
 <path d="M935.3 271.4 C943.9 268.5 954.9 267.8 964.0 267.6 C973.1 267.4 981.3 267.6 990.0 270.0 C998.7 272.4 1007.6 277.0 1016.0 282.0 C1024.4 287.0 1031.2 294.1 1040.3 300.2 C1049.4 306.3 1062.1 312.3 1070.5 318.4 C1078.9 324.4 1085.2 331.5 1090.6 336.5 C1096.0 341.5 1099.7 344.1 1102.7 348.5 C1105.7 352.9 1107.4 357.2 1108.7 362.6 C1110.0 368.0 1110.7 374.3 1110.7 380.7 C1110.7 387.1 1110.7 394.8 1108.7 400.9 C1106.7 406.9 1103.4 412.6 1098.7 417.0 C1094.0 421.4 1088.6 424.3 1080.6 427.0 C1072.5 429.7 1058.8 431.3 1050.4 433.0 C1042.0 434.7 1038.6 436.8 1030.2 437.0 C1021.8 437.2 1009.5 435.1 1000.0 434.0 C990.5 432.9 982.7 431.7 973.5 430.7 C964.3 429.7 954.4 429.6 944.9 427.8 C935.4 426.1 925.8 424.0 916.3 420.2 C906.8 416.4 895.3 410.1 887.7 405.0 C880.1 399.9 875.6 395.4 870.5 389.7 C865.4 384.0 861.0 377.3 857.2 370.6 C853.4 363.9 849.5 355.3 847.6 349.6 C845.7 343.9 845.4 340.7 845.7 336.3 C846.0 331.9 846.3 327.8 849.5 323.0 C852.7 318.2 858.4 312.5 864.8 307.7 C871.2 302.9 879.8 298.1 887.7 294.3 C895.7 290.5 904.6 288.6 912.5 284.8 C920.4 281.0 926.7 274.3 935.3 271.4 Z" fill="url(#gHead)"/>
 <path d="M935 424 Q955 430 981 430 L1040 424 L1085 414 L1100 416 L1085 428 Q1070 436 1057 441 L1036 442 Q1000 443 968 438 Q948 433 935 426 Z" fill="#5f6670"/>
 <path d="M1036 443.5 L1057 442 L1060 436 L1045 437 Z" fill="#8a939d"/>
 <path d="M938.5 269 L964 267 L996 271.6 L1015.5 280.5 L1019.4 288 L1009 294.7 L1000 296 Q970 285 938 277 Z" fill="#959ea8"/>
 <path d="M1019.4 284 Q1030 292 1040.3 300.2 Q1055 310 1070.5 318.4 Q1082 327 1090.6 336.5 Q1075 342 1055 340 Q1035 338 1024.5 334.5 L1000 296 Q1008 293 1009 294.7 Z" fill="#8b949e"/>
 <path d="M934 279 Q933 284 938 285 L997 304 Q1000 305 1000 301 L999 297 Q998 295 995 294 L938 276 Q934 275 934 279 Z" fill="#a9b2bc" stroke="#7f8892" stroke-width="0.6" stroke-dasharray="1 1.5"/>

 <ellipse cx="934" cy="368" rx="92" ry="51" transform="rotate(26.5 934 368)" fill="#98a1ab"/>
 <ellipse cx="935" cy="369" rx="89" ry="48.5" transform="rotate(26.5 935 369)" fill="url(#gFace)"/>
 <ellipse cx="1070.5" cy="390.5" rx="42" ry="30" transform="rotate(-15 1070.5 390.5)" fill="url(#gEar)"/>
 <path d="M1040 378 Q1033 390 1038 404" stroke="#dfe5ea" stroke-width="2.2" fill="none"/>
 <ellipse cx="1078" cy="394" rx="35" ry="22" transform="rotate(-23 1078 394)" fill="#6b737d"/>
 <ellipse cx="1078" cy="394" rx="33" ry="20" transform="rotate(-23 1078 394)" fill="none" stroke="#9aa3ad" stroke-width="0.7" stroke-dasharray="2 1"/>
 <path d="M1096 385 Q1075 378 1068 391 Q1068 403 1091 403" fill="none" stroke="#a6afb9" stroke-width="1.2"/>
 <!-- axis triad -->
 <path d="M845 574 L846 551" stroke="#1fd31f" stroke-width="1"/><circle cx="846" cy="551" r="2" fill="#1fd31f"/>
 <path d="M845 574 L829 580" stroke="#18d8e8" stroke-width="1"/><circle cx="829" cy="580" r="3" fill="#18d8e8"/>
 <path d="M845 574 L862 582" stroke="#ff3030" stroke-width="1"/><circle cx="862" cy="582" r="2.5" fill="#ff3030"/>
</svg>
<!-- viewport toolbar -->
<div class="a" style="left:958px;top:181px;width:300px;height:32px;background:#f4f6f8;border:1px solid #a09c98"></div>
<div class="a" style="left:1223px;top:186px;width:30px;height:23px;background:#d8dadc;border:1px solid #b9bdc0"></div>
<svg style="left:966px;top:189px" width="17" height="17" viewBox="0 0 17 17">
 <rect x="0.5" y="0.5" width="14" height="14" fill="#f8f8f8" stroke="#a8a8a8"/>
 <circle cx="6.5" cy="6.5" r="4.5" fill="#e4f4fb" stroke="#2d88b8" stroke-width="1.2"/>
 <path d="M10 10 L15.5 15.5" stroke="#a0a0a0" stroke-width="2.2"/>
</svg>
<svg style="left:992px;top:189px" width="17" height="17" viewBox="0 0 17 17">
 <circle cx="6.5" cy="6.5" r="5.5" fill="#eef8fc" stroke="#2d88b8" stroke-width="1.2"/>
 <path d="M6.5 3.5 V9.5 M3.5 6.5 H9.5" stroke="#17577f" stroke-width="2"/>
 <path d="M10.5 10.5 L15.5 15.5" stroke="#a0a0a0" stroke-width="2.4"/>
</svg>
<svg style="left:1018px;top:189px" width="17" height="17" viewBox="0 0 17 17">
 <circle cx="6.5" cy="6.5" r="5.5" fill="#eef8fc" stroke="#2d88b8" stroke-width="1.2"/>
 <path d="M3.5 6.5 H9.5" stroke="#17577f" stroke-width="2"/>
 <path d="M10.5 10.5 L15.5 15.5" stroke="#a0a0a0" stroke-width="2.4"/>
</svg>
<svg style="left:1044px;top:189px" width="16" height="16" viewBox="0 0 16 16">
 <rect x="0.5" y="0.5" width="15" height="15" fill="#fff" stroke="#9a9a9a"/>
 <path d="M1 4 Q9 1.5 15 6 V15 H1 Z" fill="#9fd3ea"/>
 <path d="M1 4 Q9 1.5 15 6" fill="none" stroke="#fff" stroke-width="1.2"/>
 <path d="M3 14 L13 5" stroke="#1d5f88" stroke-width="1.4"/>
</svg>
<svg style="left:1070px;top:189px" width="19" height="18" viewBox="0 0 19 18">
 <defs><radialGradient id="gsm" cx="0.35" cy="0.35" r="0.7"><stop offset="0" stop-color="#fff"/><stop offset="1" stop-color="#8a8a8a"/></radialGradient></defs>
 <path d="M7 4 L10 1 H16 V9 L13 12 H7 Z" fill="#d8d8d8"/><path d="M7 4 H13 V12" fill="none" stroke="#bbb" stroke-width="0.5"/><path d="M13 4 L16 1 V9 L13 12 Z" fill="#a8a8a8"/>
 <circle cx="6" cy="11" r="5.5" fill="url(#gsm)"/>
 <path d="M16 17 L18.5 14.5 V17 Z" fill="#444"/>
</svg>
<svg style="left:1096px;top:188px" width="19" height="19" viewBox="0 0 19 19">
 <path d="M0.5 4 L4 0.5 H15.5 L12 4 Z" fill="#c9ecf9" stroke="#6fb9dc" stroke-width="0.8"/>
 <rect x="0.5" y="4" width="11.5" height="12" fill="#fff" stroke="#6fb9dc" stroke-width="0.8"/>
 <path d="M12 4 L15.5 0.5 V12.5 L12 16 Z" fill="#8ccbe6" stroke="#6fb9dc" stroke-width="0.8"/>
 <path d="M15.5 18.5 L18.5 15.5 V18.5 Z" fill="#444"/>
</svg>
<svg style="left:1122px;top:188px" width="19" height="19" viewBox="0 0 19 19">
 <path d="M0.5 7 L4 1 H12 L16 7 L12.5 15 H4 Z" fill="#d8f1fb" stroke="#4aa3d0" stroke-width="0.9"/>
 <path d="M4 7 H16 M4 7 L0.5 7 M8 1 L4 7" stroke="#4aa3d0" stroke-width="0.8" fill="none"/>
 <path d="M12 1 L16 7 L12 9 L9 7 Z" fill="#5aaed6"/>
 <rect x="9.5" y="9.5" width="6" height="7" fill="#fff" stroke="#666" stroke-width="0.8"/>
 <path d="M11 12 H14 M11 14 H14" stroke="#666" stroke-width="0.8"/>
 <path d="M16 18.5 L18.5 16 V18.5 Z" fill="#444"/>
</svg>
<svg style="left:1148px;top:188px" width="17" height="17" viewBox="0 0 17 17">
 <rect x="0.5" y="0.5" width="13" height="14" fill="#fff" stroke="#a0a0a0"/>
 <path d="M0.5 4 H13.5 M0.5 7.5 H13.5 M0.5 11 H13.5 M4 4 V14.5" stroke="#b0b0b0" stroke-width="0.8"/>
 <path d="M7 10 H9 L10 8.5 H13 L14 10 H16.5 V16.5 H7 Z" fill="#4a4d4f"/>
 <circle cx="11.8" cy="13" r="2.4" fill="#888" stroke="#ddd" stroke-width="0.6"/>
</svg>
<svg style="left:1174px;top:188px" width="17" height="17" viewBox="0 0 17 17">
 <path d="M0.5 3.5 L4 0.5 H16.5 L13 16.5 L3 14 Z" fill="#bfe1f0" stroke="#6aa9c8" stroke-width="0.8"/>
 <path d="M5 4 H13.5 V10 H6 Z" fill="#e9f2f6" stroke="#8fb8cc" stroke-width="0.6"/>
 <path d="M6 14 L9 10 M9.5 15 L12 10" stroke="#fff" stroke-width="0.8"/>
</svg>
<svg style="left:1199px;top:188px" width="20" height="19" viewBox="0 0 20 19">
 <path d="M0.5 0.5 L5 5 M5 0.5 L0.5 5" stroke="#86692c" stroke-width="1.3"/>
 <path d="M11 0 L8 6 M6 9 L3 15 M5.5 16.5 L2.5 18.5" stroke="#86692c" stroke-width="1.3"/>
 <path d="M10 6 V13 H16 M10 13 L6 17" stroke="#86692c" stroke-width="1.1" fill="none"/>
 <path d="M8.7 7 L10 4.5 L11.3 7 Z M14.5 11.7 L17 13 L14.5 14.3 Z" fill="#86692c"/>
 <path d="M16.5 18.5 L19.5 15.5 V18.5 Z" fill="#444"/>
</svg>
<svg style="left:1226px;top:189px" width="20" height="18" viewBox="0 0 20 18">
 <rect x="0.5" y="0.5" width="10" height="7" fill="#fdf0d2" stroke="#8a8a8a" stroke-width="0.8"/>
 <path d="M11 3 H16.5 V8 M14.5 6 L16.5 8.5 L18.5 6" stroke="#333" stroke-width="1.2" fill="none"/>
 <ellipse cx="13" cy="14" rx="5" ry="2.8" fill="#333"/>
 <circle cx="13" cy="14" r="1.4" fill="#eee"/>
</svg>
</body></html>
